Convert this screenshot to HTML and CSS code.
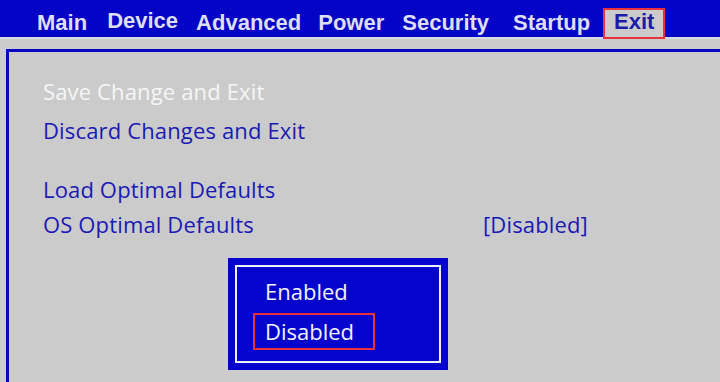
FILE: index.html
```html
<!DOCTYPE html>
<html lang="en">
<head>
    <meta charset="UTF-8">
    <meta name="viewport" content="width=device-width, initial-scale=1.0">
    <title>Exit</title>
    <link rel="stylesheet" href="styles.css">
</head>
<body>

    <!-- Top menu bar -->
    <nav class="menu-bar">
        <span class="menu-item">Main</span>
        <span class="menu-item device">Device</span>
        <span class="menu-item advanced">Advanced</span>
        <span class="menu-item power">Power</span>
        <span class="menu-item security">Security</span>
        <span class="menu-item startup">Startup</span>
        <span class="menu-item active">Exit</span>
    </nav>

    <!-- Exit page -->
    <div class="panel">
        <div class="option selected">Save Change and Exit</div>
        <div class="option second">Discard Changes and Exit</div>
        <div class="option group">Load Optimal Defaults</div>
        <div class="option setting">
            <span class="label">OS Optimal Defaults</span>
            <span class="value">[Disabled]</span>
        </div>
    </div>

    <!-- Choice popup -->
    <div class="popup">
        <div class="popup-inner">
            <div class="choice">Enabled</div>
            <div class="choice current">Disabled</div>
        </div>
    </div>

</body>
</html>
```

FILE: styles.css
```css
body {
    margin: 0;
    background: #cbcbcb;
    font-family: 'Open Sans', 'Noto Sans', sans-serif;
    overflow: hidden;
    height: 382px;
    position: relative;
}

/* Menu bar */
.menu-bar {
    display: flex;
    align-items: flex-end;
    gap: 19px;
    height: 35px;
    padding: 0 0 2px 37px;
    background: #0404c6;
    border-bottom: 2px solid #dadae2;
}

.menu-item {
    font-family: 'Liberation Sans', Arial, sans-serif;
    font-weight: bold;
    font-size: 22px;
    line-height: 24px;
    color: #dedef2;
}

.menu-item.device {
    margin-left: 1px;
    padding-bottom: 2px;
}

.menu-item.advanced {
    margin-left: -1px;
}

.menu-item.power {
    margin-left: -2px;
}

.menu-item.security {
    margin-left: -1px;
}

.menu-item.startup {
    margin-left: 5px;
}

.menu-item.active {
    margin-left: -6px;
    margin-bottom: -4px;
    padding: 0 9px 3px;
    border: 2px solid #e8323c;
    background: #cbcbcb;
    color: #1c1ca8;
}

/* Main panel */
.panel {
    box-sizing: border-box;
    height: 333px;
    margin: 10px 0 0 6px;
    border-top: 3px solid #0606c0;
    border-left: 3px solid #0606c0;
    padding: 22px 0 0 34px;
}

.option {
    font-size: 22px;
    line-height: 35px;
    letter-spacing: 0.15px;
    color: #1a1ab6;
}

.option.selected {
    color: #f6f6f6;
}

.option.second {
    margin-top: 4px;
}

.option.group {
    margin-top: 24px;
}

.setting {
    display: grid;
    grid-template-columns: 440px auto;
}

/* Popup */
.popup {
    position: absolute;
    left: 228px;
    top: 258px;
    width: 220px;
    height: 112px;
    box-sizing: border-box;
    padding: 7px;
    background: #0404cc;
}

.popup-inner {
    height: 100%;
    box-sizing: border-box;
    border: 2px solid #f0f0f8;
    padding: 6px 0 0 16px;
}

.choice {
    width: 118px;
    box-sizing: border-box;
    border: 2px solid transparent;
    padding-left: 10px;
    font-size: 22px;
    line-height: 33px;
    color: #f2f2fa;
}

.choice.current {
    margin-top: 3px;
    width: 122px;
    border-color: #e8323c;
}
```
